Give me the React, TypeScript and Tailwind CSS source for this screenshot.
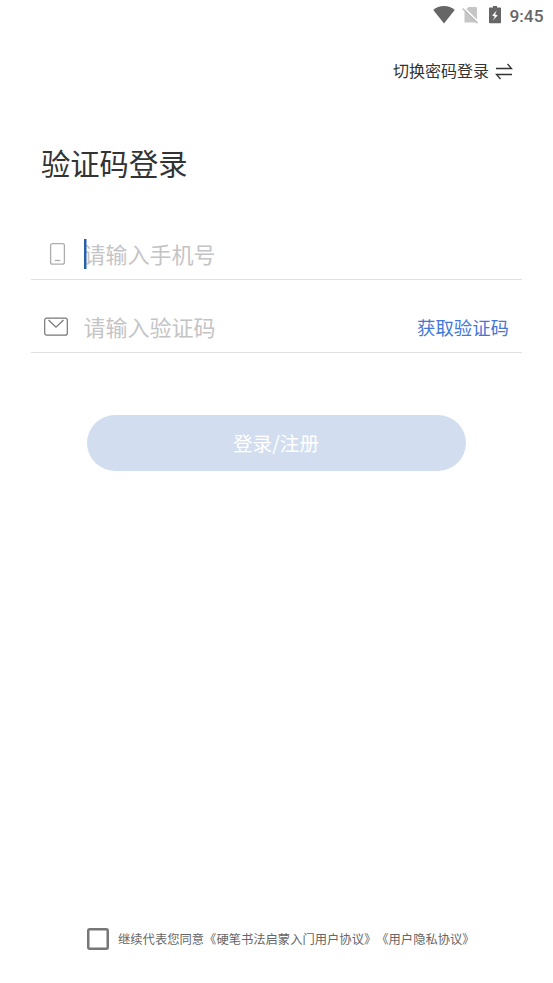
import type { ReactNode } from "react"

function StatusBar() {
  return (
    <div className="flex h-8 items-start justify-end pr-[9.500px] text-[#666]">
      <svg className="mt-[6px] mr-[7px] h-[18px] w-[22px]" viewBox="0 0 22 18" fill="currentColor">
        <path d="M11 17.500 0.300 4C3 1.400 6.900 0 11 0s8 1.400 10.700 4z" />
      </svg>
      <svg className="mt-[6px] mr-[10px] h-[18px] w-[17px]" viewBox="0 0 17 18">
        <path d="M3.500 4 6.500 1h7.300q1.200 0 1.200 1.200V16.500H2.500V5z" fill="#c6c6c6" />
        <path d="M1.800 1.500 16.800 16.500" stroke="#fff" strokeWidth="1.600" />
        <path d="M.7 2.500 15.500 17.300" stroke="#bdbdbd" strokeWidth="1.400" />
      </svg>
      <svg className="mt-[6px] mr-[8px] h-[18px] w-3" viewBox="0 0 12 18" fill="currentColor">
        <path d="M4 0h4v1.500h3.200q.8 0 .8.800v14.200q0 .8-.8.800H.8q-.8 0-.8-.8V2.300q0-.8.800-.8H4z" />
        <path d="M7.800 4.300 3.200 9.600l2.700 1.100-2.500 4.100 5.300-5.300-2.600-1.200z" fill="#fff" />
      </svg>
      <span className="mt-[5px] font-['Roboto'] text-[17.300px] leading-[22px] font-medium">9:45</span>
    </div>
  )
}

function PhoneIcon() {
  return (
    <svg className="h-6 w-6" viewBox="0 0 24 24" fill="none" stroke="#adadad" strokeWidth="1.300">
      <rect x="6.600" y="1.600" width="13.800" height="20.600" rx="2" />
      <path d="M10.800 18.500h5.500" />
    </svg>
  )
}

function MailIcon() {
  return (
    <svg className="h-6 w-6" viewBox="0 0 24 24" fill="none" stroke="#777" strokeWidth="1.200">
      <rect x=".7" y="3.200" width="22.600" height="17" rx="2" />
      <path d="m4.500 5 7.500 7.200 7.500-7.200" />
    </svg>
  )
}

interface FieldProps {
  icon: ReactNode
  placeholder: string
  focused?: boolean
  action?: string
}

function Field({ icon, placeholder, focused, action }: FieldProps) {
  return (
    <div className="flex h-[73px] items-end border-b border-[#e0e0e0] pr-[13px] pl-[13px]">
      <div className="flex h-[50px] w-full items-center">
        {icon}
        <div className="relative ml-[15.500px] text-[22px] leading-[30px] text-[#c4c4c6]">
          <span className="-mt-px mb-px block">{placeholder}</span>
          {focused && (
            <svg className="absolute top-0 left-[0.500px] h-[30px] w-[3px]" viewBox="0 0 3 30">
              <rect width="2.500" height="30" fill="#2660a8" />
            </svg>
          )}
        </div>
        {action && <button className="mt-px ml-auto text-[18.400px] text-[#4478d8]">{action}</button>}
      </div>
    </div>
  )
}

export default function App() {
  return (
    <div className="flex h-[983px] w-[553px] flex-col bg-white font-['Noto_Sans_CJK_SC',sans-serif] whitespace-nowrap">
      <StatusBar />

      <div className="mt-[26px] flex h-6 items-center justify-end pr-10 text-base text-[#333]">
        <span>切换密码登录</span>
        <svg className="mt-[2px] ml-[6px] h-[18px] w-[18px]" viewBox="0 0 18 18" fill="none" stroke="#333" strokeWidth="1.300">
          <path d="M1 6.500h15.500L12.500 2M17 12.500H1.500l4 4.500" />
        </svg>
      </div>

      <h1 className="mt-[58px] ml-[41px] h-11 text-[29.300px] leading-[44px] text-[#333]">验证码登录</h1>

      <div className="mt-[23px] mr-[31px] ml-[31px]">
        <Field icon={<PhoneIcon />} placeholder="请输入手机号" focused />
        <Field icon={<MailIcon />} placeholder="请输入验证码" action="获取验证码" />
      </div>

      <button className="mt-[62px] ml-[87px] h-14 w-[379px] rounded-full bg-[#d2deef] pr-px text-[19.600px] text-white">
        登录/注册
      </button>

      <label className="mt-auto mb-[33px] ml-[87px] flex h-[22px] items-center text-[12.300px] text-[#666] [text-spacing-trim:space-all]">
        <svg className="mr-[9px] h-[22px] w-[22px]" viewBox="0 0 22 22" fill="none" stroke="#777" strokeWidth="2.500">
          <rect x="1.250" y="1.250" width="19.500" height="19.500" rx="1.500" />
        </svg>
        <span>继续代表您同意《硬笔书法启蒙入门用户协议》《用户隐私协议》</span>
      </label>
    </div>
  )
}
